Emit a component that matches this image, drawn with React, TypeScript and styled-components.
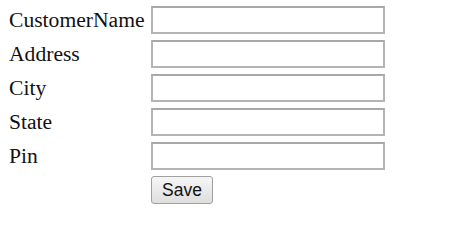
import React from "react";
import styled, { createGlobalStyle } from "styled-components";

const Global = createGlobalStyle`
  html, body { margin: 0; padding: 0; background: #ffffff; }
  body { font-family: "Liberation Serif", "Times New Roman", serif; color: #111; }
`;

const Form = styled.form`
  display: grid;
  grid-template-columns: 143px 234px;
  grid-auto-rows: 28px;
  row-gap: 6px;
  padding: 6px 0 0 8px;
  align-items: center;
`;

const Label = styled.label`
  font-family: "Liberation Serif", "Times New Roman", serif;
  font-size: 21.6px;
  line-height: 24px;
  padding-left: 1px;
  color: #111;
`;

const Input = styled.input`
  box-sizing: border-box;
  width: 234px;
  height: 28px;
  margin: 0;
  border: 2px solid #b4b4b4;
  border-top-color: #a8a8a8;
  background: #fff;
  outline: none;
`;

const Button = styled.button`
  grid-column: 2;
  justify-self: start;
  box-sizing: border-box;
  width: 62px;
  height: 28px;
  margin: 0;
  padding: 0;
  font-family: "Liberation Sans", Arial, sans-serif;
  font-size: 17.5px;
  color: #111;
  border: 1px solid #a0a0a0;
  border-radius: 3px;
  background: linear-gradient(#f6f6f6, #dedede);
`;

const fields = ["CustomerName", "Address", "City", "State", "Pin"];

export default function App() {
  return (
    <>
      <Global />
      <Form onSubmit={(e) => e.preventDefault()}>
        {fields.map((f) => (
          <React.Fragment key={f}>
            <Label>{f}</Label>
            <Input type="text" />
          </React.Fragment>
        ))}
        <Button type="submit">Save</Button>
      </Form>
    </>
  );
}
